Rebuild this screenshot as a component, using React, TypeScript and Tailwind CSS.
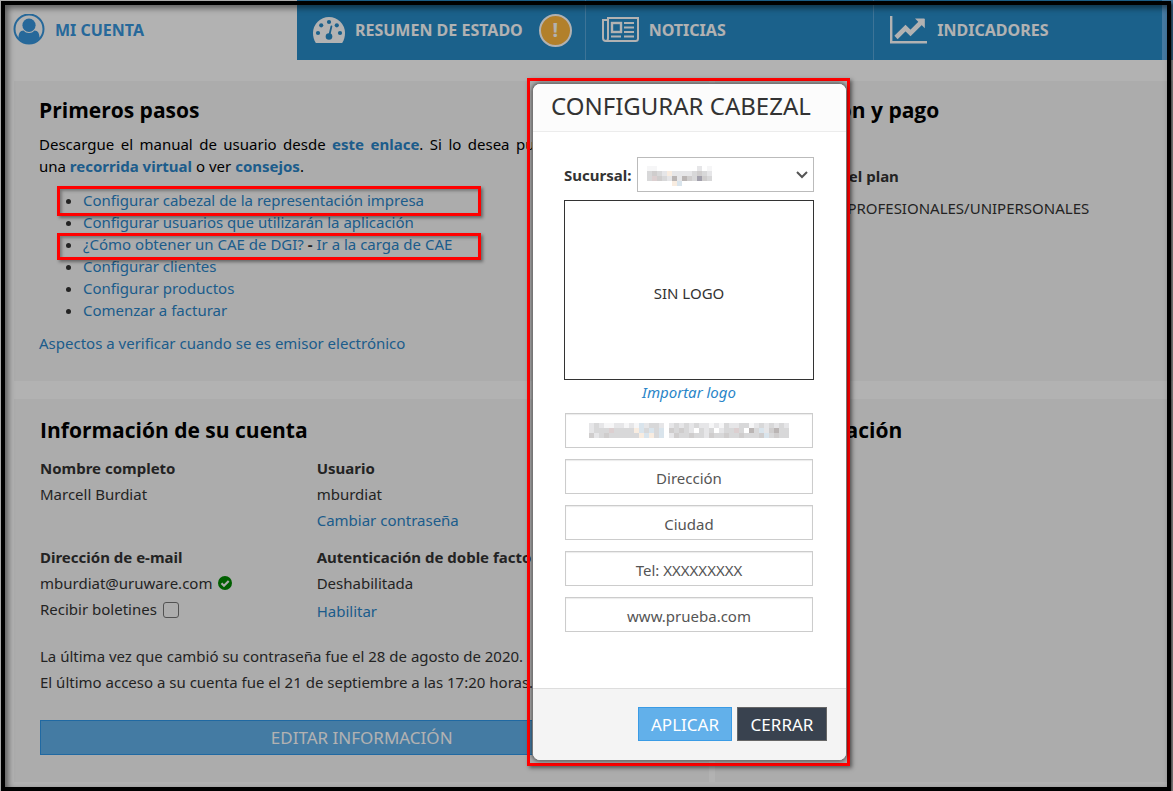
import { useState } from 'react';
import type { ReactNode } from 'react';

interface Tab {
  label: string;
  icon: ReactNode;
  warning?: boolean;
}

interface Step {
  links: string[];
  highlight?: string;
}

interface HeaderField {
  name: string;
  label: string;
  value: string;
  pixels?: string[];
}

const UserIcon = () => (
  <svg className="size-[32px]" viewBox="0 0 32 32" fill="none">
    <circle cx="16" cy="15" r="14.500" stroke="currentColor" strokeWidth="2" />
    <ellipse cx="16" cy="11.200" rx="6.600" ry="6.800" fill="currentColor" />
    <path
      fill="currentColor"
      d="M5.500 24c0-4.500 1.500-7.500 5-7.500 1.500 1.700 3.300 2.500 5.500 2.500s4-.8 5.500-2.500c3.500 0 5 3 5 7.500-2.500 3.500-6.200 5.700-10.500 5.700S8 27.500 5.500 24z"
    />
  </svg>
);

const GaugeIcon = () => (
  <svg className="h-[26px] w-[32px]" viewBox="0 0 32 26">
    <path fill="currentColor" d="M16 0a16 16 0 0 1 16 16c0 3.500-.8 6.700-2.500 9.500-.3.400-.6.500-1 .5h-25c-.4 0-.7-.1-1-.5C.8 22.700 0 19.500 0 16A16 16 0 0 1 16 0z" />
    <g fill="#288bc8">
      <circle cx="5" cy="16" r="2.100" />
      <circle cx="8.200" cy="8.300" r="2.100" />
      <circle cx="16" cy="5" r="2.100" />
      <circle cx="23.800" cy="8.300" r="2.100" />
      <circle cx="27" cy="16" r="2.100" />
      <circle cx="16" cy="19.500" r="3.300" />
    </g>
    <path d="M16.300 18.500L18.400 9.500" stroke="#288bc8" strokeWidth="1.800" strokeLinecap="round" />
  </svg>
);

const NewsIcon = () => (
  <svg className="h-[26px] w-[37px]" viewBox="0 0 37 26" fill="none" stroke="currentColor" strokeWidth="2">
    <path d="M6 3H1v18c0 2 1 3 3 3h29.500c1.500 0 2.500-1 2.500-2.500V1H6v20c0 2-.5 3-2 3" />
    <rect x="10" y="6" width="9" height="9" strokeWidth="2.400" />
    <path d="M22 6h10M22 10.500h10M22 15h10M9 19.500h10M22 19.500h10" />
  </svg>
);

const ChartIcon = () => (
  <svg className="h-[28px] w-[37px]" viewBox="0 0 37 28">
    <path d="M1.200 0v26.300H37" fill="none" stroke="currentColor" strokeWidth="2.400" />
    <path d="M6 21.500l9.500-9.500 5 5L30.500 7" fill="none" stroke="currentColor" strokeWidth="4.600" />
    <path d="M25 2.500h9c.5 0 .8.300.8.800v9z" fill="currentColor" />
  </svg>
);

const CheckBadge = () => (
  <svg className="size-[14px]" viewBox="0 0 14 14" fill="none">
    <circle cx="7" cy="7" r="7" fill="#008800" />
    <path d="M3.500 7.200L6 9.700l4.700-4.700" stroke="#f7f7f7" strokeWidth="2.200" />
  </svg>
);

// Shades for the censored values, one letter per mosaic cell
const SHADES: Record<string, string> = {
  a: '#f6f6f7',
  b: '#e6e6e8',
  c: '#d8d8d9',
  d: '#cfcdcd',
  e: '#bab5b4',
  f: '#a19fab',
  o: '#f8ece0',
  u: '#d9e4ec',
  p: '#dccfd0',
};

function Mosaic({ rows }: { rows: string[] }) {
  const cells = rows.flatMap((row, y) =>
    row.split('').map((c, x) =>
      SHADES[c] ? <rect key={`${x}-${y}`} x={x * 5} y={y * 5} width="5" height="5" fill={SHADES[c]} /> : null
    )
  );
  return (
    <svg width={rows[0].length * 5} height={rows.length * 5} shapeRendering="crispEdges" aria-hidden="true">
      {cells}
    </svg>
  );
}

const tabs: Tab[] = [
  { label: 'RESUMEN DE ESTADO', icon: <GaugeIcon />, warning: true },
  { label: 'NOTICIAS', icon: <NewsIcon /> },
  { label: 'INDICADORES', icon: <ChartIcon /> },
];

const steps: Step[] = [
  { links: ['Configurar cabezal de la representación impresa'], highlight: '-top-[3px] h-[30px] w-[424px]' },
  { links: ['Configurar usuarios que utilizarán la aplicación'] },
  { links: ['¿Cómo obtener un CAE de DGI?', 'Ir a la carga de CAE'], highlight: 'top-0 h-[27px] w-[424px]' },
  { links: ['Configurar clientes'] },
  { links: ['Configurar productos'] },
  { links: ['Comenzar a facturar'] },
];

const fields: HeaderField[] = [
  {
    name: 'empresa',
    label: 'Empresa',
    value: '',
    pixels: [
      'bcbaabbabaubccb bcbcbcbbabacbbccabcbcbcb',
      'bcccpccccoucucu dcdcb cbc bccpc ecubdecc',
      'dbcdccccccouocu bdccdccbdccdccdcccducdcca',
    ],
  },
  { name: 'direccion', label: 'Dirección', value: 'Dirección' },
  { name: 'ciudad', label: 'Ciudad', value: 'Ciudad' },
  { name: 'telefono', label: 'Teléfono', value: 'Tel: XXXXXXXXX' },
  { name: 'web', label: 'Sitio web', value: 'www.prueba.com' },
];

const linkClass = 'text-[#2a85c8] hover:underline';
const headingClass = "font-['Open_Sans','Noto_Sans',sans-serif] text-[21px] leading-[28px] font-bold text-black";

function TopNav() {
  return (
    <nav className="flex h-[60px] bg-[#65afe8] pr-[11px] text-[16px] font-bold">
      <a href="#cuenta" className="flex w-[297px] shrink-0 items-center gap-[10px] bg-white pl-[13px] text-[#3796dd]">
        <UserIcon />
        MI CUENTA
      </a>
      {tabs.map((tab, i) => (
        <a
          key={tab.label}
          href={`#tab-${i}`}
          className="flex flex-1 items-center gap-[10px] border-r border-[#5aa6d8] bg-[#288bc8] pl-4 whitespace-nowrap text-white last:border-r-0"
        >
          {tab.icon}
          {tab.label}
          {tab.warning && (
            <span className="ml-[6px] flex size-[33px] items-center justify-center rounded-full border-2 border-white bg-[#ffb83e] text-[20px]">
              !
            </span>
          )}
        </a>
      ))}
    </nav>
  );
}

function FirstSteps() {
  return (
    <section className="min-h-[300px] bg-[#f7f7f7] px-[25px] pt-[15px] pb-[27px]">
      <h2 className={`mb-[9px] ${headingClass}`}>Primeros pasos</h2>
      <p className="text-justify text-black">
        Descargue el manual de usuario desde{' '}
        <a href="#manual" className="font-bold text-[#2a85c8]">este enlace</a>. Si lo desea puede también realizar una&nbsp;
        <a href="#recorrida" className="font-bold text-[#2a85c8]">recorrida virtual</a> o ver{' '}
        <a href="#consejos" className="font-bold text-[#2a85c8]">consejos</a>.
      </p>
      <ul className="mt-3 list-disc pl-11">
        {steps.map((step) => (
          <li key={step.links[0]} className="relative">
            {step.links.map((text, i) => (
              <span key={text}>
                {i > 0 && <b> - </b>}
                <a href="#paso" className={linkClass}>{text}</a>
              </span>
            ))}
            {step.highlight && (
              <span
                className={`pointer-events-none absolute -left-[26px] z-20 border-[3px] border-[#ff0000] shadow-[2px_2px_3px_rgba(0,0,0,0.4),inset_2px_2px_3px_rgba(0,0,0,0.3)] ${step.highlight}`}
              />
            )}
          </li>
        ))}
      </ul>
      <a href="#aspectos" className={`mt-[11px] block ${linkClass}`}>
        Aspectos a verificar cuando se es emisor electrónico
      </a>
    </section>
  );
}

function AccountInfo() {
  const [newsletter, setNewsletter] = useState(false);

  return (
    <section className="bg-[#f7f7f7] px-[26px] pt-[17px] pb-[27px] leading-[26px]">
      <h2 className={`mb-[11px] ${headingClass}`}>Información de su cuenta</h2>
      <div className="grid grid-cols-[43%_1fr] gap-y-[11px]">
        <div>
          <h3 className="font-bold">Nombre completo</h3>
          <p>Marcell Burdiat</p>
        </div>
        <div>
          <h3 className="font-bold">Usuario</h3>
          <p>mburdiat</p>
          <a href="#clave" className={linkClass}>Cambiar contraseña</a>
        </div>
        <div>
          <h3 className="font-bold">Dirección de e-mail</h3>
          <p className="flex items-center gap-[6px]">
            mburdiat@uruware.com
            <CheckBadge />
          </p>
          <label className="flex items-center gap-[6px]">
            Recibir boletines
            <input
              type="checkbox"
              checked={newsletter}
              onChange={(e) => setNewsletter(e.target.checked)}
              className="mt-[2px] size-4 appearance-none rounded-[3px] border border-[#767676] bg-white/20 checked:bg-[#2a85c8]"
            />
          </label>
        </div>
        <div>
          <h3 className="font-bold whitespace-nowrap">Autenticación de doble factor</h3>
          <p>Deshabilitada</p>
          <a href="#habilitar" className={`mt-[2px] block ${linkClass}`}>Habilitar</a>
        </div>
      </div>
      <div className="mt-[19px]">
        <p>La última vez que cambió su contraseña fue el 28 de agosto de 2020.</p>
        <p>El último acceso a su cuenta fue el 21 de septiembre a las 17:20 horas.</p>
      </div>
      <button
        type="button"
        className="mt-[25px] block h-[35px] w-full border border-[#2f97e8] bg-[#62b0ea] text-[17px] leading-none text-white"
      >
        EDITAR INFORMACIÓN
      </button>
    </section>
  );
}

function HeaderDialog() {
  const [values, setValues] = useState<Record<string, string>>(
    Object.fromEntries(fields.map((f) => [f.name, f.value]))
  );

  return (
    <div className="absolute top-[78px] left-[527px] z-20 w-[323px] border-[3px] border-[#ff0000] py-[2px] pl-[2px] shadow-[2px_2px_4px_rgba(0,0,0,0.5)]">
      <div
        role="dialog"
        aria-labelledby="dialog-title"
        className="overflow-hidden rounded-lg border border-[#777] bg-white shadow-[0_0_4px_rgba(0,0,0,0.6)]"
      >
        <header className="border-b border-[#ececec] bg-[#fcfcfc] px-[18px] pt-[5px] pb-[8px]">
          <h1 id="dialog-title" className="text-[24px] leading-[34px] whitespace-nowrap">CONFIGURAR CABEZAL</h1>
        </header>

        <div className="pt-[25px] pr-8 pb-[56px] pl-[31px]">
          <div className="flex items-center justify-between">
            <label htmlFor="sucursal" className="font-bold">Sucursal:</label>
            <div className="relative w-[177px]">
              <select id="sucursal" className="block h-[35px] w-full appearance-none border border-[#bbb] bg-white px-2">
                <option value=""></option>
              </select>
              <span className="pointer-events-none absolute top-[9px] left-[10px]">
                <Mosaic rows={['aa        b a', 'cdcbobbbbcdcb', 'cpdcbebedcfdc', '     ou      ']} />
              </span>
              <svg
                className="pointer-events-none absolute top-[14px] right-[6px] h-[8px] w-[12px]"
                viewBox="0 0 12 8"
                fill="none"
                stroke="#555"
                strokeWidth="2"
              >
                <path d="M1 1l5 5 5-5" />
              </svg>
            </div>
          </div>

          <div className="mt-2 flex h-[180px] items-center justify-center border border-[#333]">
            <span className="pt-[6px]">SIN LOGO</span>
          </div>
          <a href="#logo" className="mt-px block text-center text-[#2a85c8] italic">Importar logo</a>

          <div className="mx-px mt-[10px] flex flex-col gap-[11px]">
            {fields.map((field) => (
              <div key={field.name} className="relative">
                <input
                  type="text"
                  name={field.name}
                  aria-label={field.label}
                  value={values[field.name]}
                  onChange={(e) => setValues({ ...values, [field.name]: e.target.value })}
                  className="block h-[35px] w-full border border-[#ccc] bg-white pt-[2px] text-center text-[#555] shadow-[inset_0_1px_1px_rgba(0,0,0,0.08)] outline-none"
                />
                {field.pixels && (
                  <span className="pointer-events-none absolute inset-x-0 top-[10px] flex justify-center">
                    <Mosaic rows={field.pixels} />
                  </span>
                )}
              </div>
            ))}
          </div>
        </div>

        <footer className="flex justify-end gap-[5px] border-t border-[#ddd] bg-[#f4f4f4] pt-[18px] pr-[19px] pb-[19px] text-[17px] leading-none text-white">
          <button type="button" className="h-[34px] w-[94px] border border-[#3a9be5] bg-[#62b0ea]">APLICAR</button>
          <button type="button" className="h-[34px] w-[90px] border border-[#666] bg-[#39424f]">CERRAR</button>
        </footer>
      </div>
    </div>
  );
}

export default function App() {
  return (
    <div className="relative min-h-screen overflow-hidden bg-white font-['Noto_Sans','Open_Sans',sans-serif] text-[15px] leading-[22px] text-[#333]">
      <TopNav />

      <main className="flex gap-[6px] pt-[21px] pb-[9px] pl-[14px]">
        <div className="flex w-3/5 flex-col gap-[18px]">
          <FirstSteps />
          <AccountInfo />
        </div>
        <div className="flex flex-1 flex-col gap-[18px]">
          <section className="min-h-[300px] bg-[#f7f7f7] px-[26px] pt-[15px]">
            <h2 className={headingClass}>Facturación y pago</h2>
            <h3 className="mt-[41px] font-bold">Vencimiento del plan</h3>
            <p className="mt-[10px] pl-[106px]">PROFESIONALES/UNIPERSONALES</p>
          </section>
          <section className="flex-1 bg-[#f7f7f7] px-[26px] pt-[17px]">
            <h2 className={headingClass}>Administración</h2>
          </section>
        </div>
      </main>

      <div className="absolute inset-0 z-10 bg-black/30" />
      <HeaderDialog />
      <div className="pointer-events-none absolute top-px right-[2px] bottom-0 left-px z-30 border-4 border-black shadow-[inset_3px_3px_6px_rgba(0,0,0,0.5),2px_2px_3px_rgba(0,0,0,0.6)]" />
    </div>
  );
}
